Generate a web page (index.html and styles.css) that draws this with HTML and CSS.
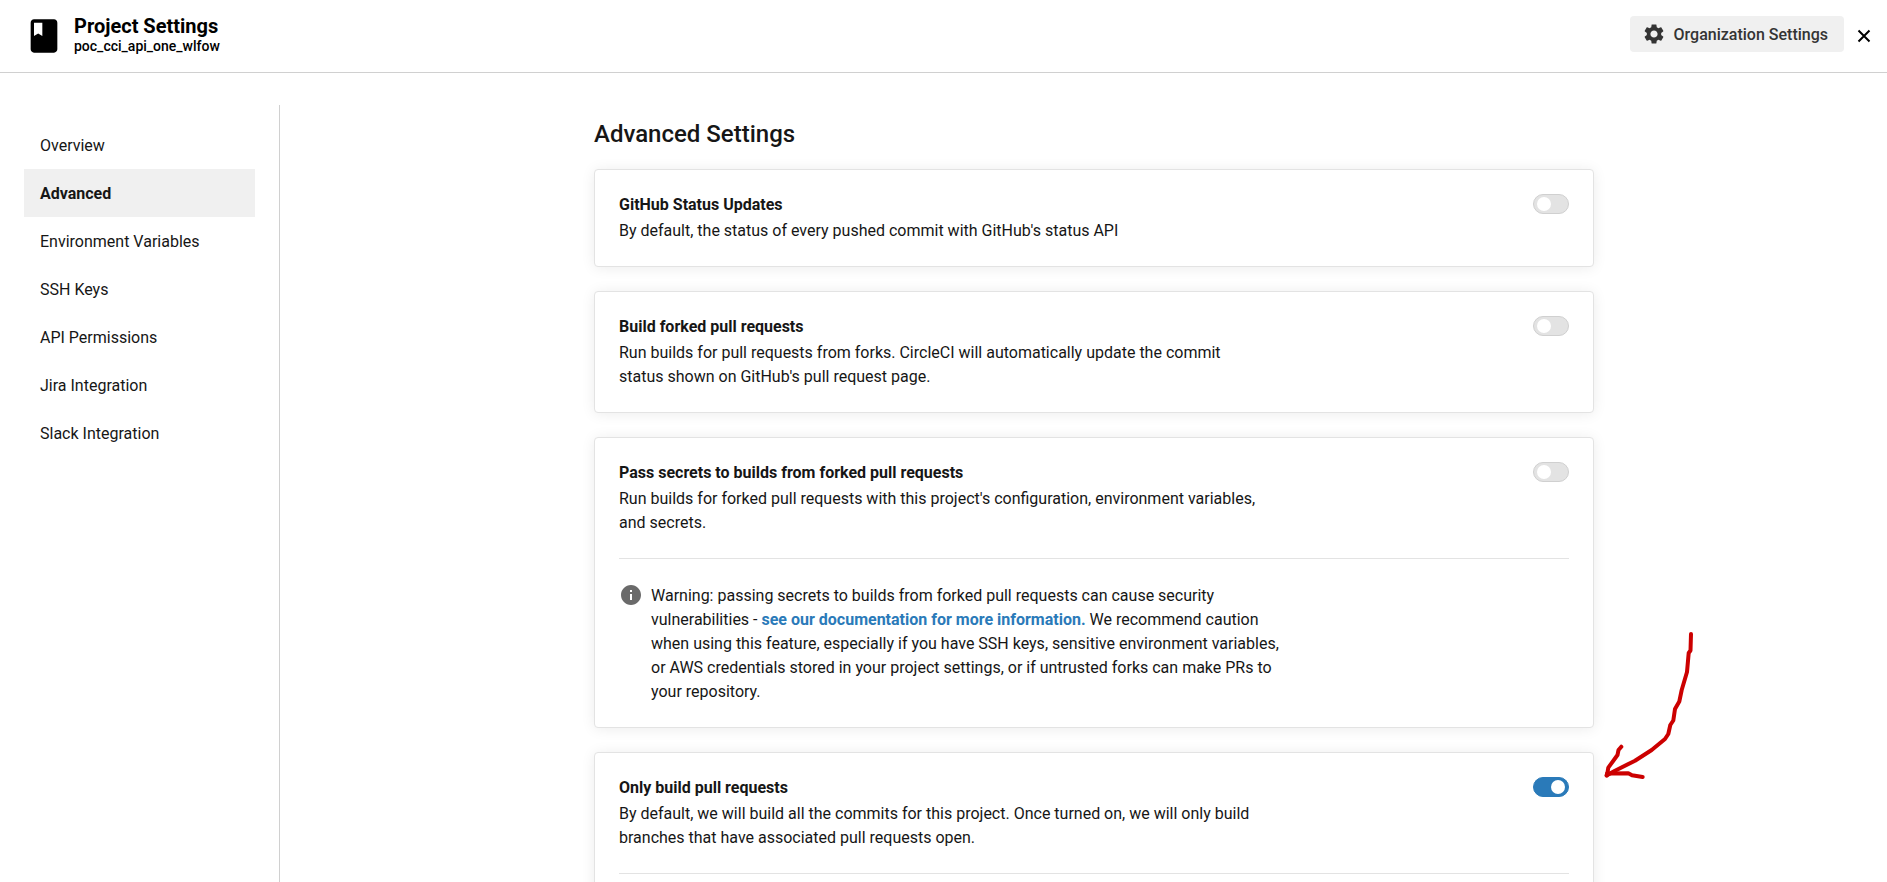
FILE: index.html
```html
<!DOCTYPE html>
<html lang="en">
<head>
<meta charset="utf-8">
<title>Project Settings</title>
<meta name="viewport" content="width=device-width, initial-scale=1">
<link rel="stylesheet" href="styles.css">
</head>
<body>
<header class="topbar">
  <svg class="topbar-icon" viewBox="0 0 24 24" aria-hidden="true"><path d="M18 2H6c-1.100 0-2 .9-2 2v16c0 1.100.9 2 2 2h12c1.100 0 2-.9 2-2V4c0-1.100-.9-2-2-2zM6 4h5v8l-2.500-1.500L6 12V4z"/></svg>
  <div class="topbar-titles">
    <h1 class="topbar-title">Project Settings</h1>
    <p class="topbar-project">poc_cci_api_one_wlfow</p>
  </div>
  <button class="org-button" type="button">
    <svg class="icon" viewBox="0 0 24 24" aria-hidden="true"><path d="M19.140 12.940c.04-.3.06-.61.06-.94 0-.32-.02-.64-.07-.94l2.030-1.580c.18-.14.23-.41.12-.61l-1.920-3.320c-.12-.22-.37-.29-.59-.22l-2.390.96c-.5-.38-1.030-.7-1.620-.94l-.36-2.540c-.04-.24-.24-.41-.48-.41h-3.840c-.24 0-.43.17-.47.41l-.36 2.540c-.59.24-1.130.57-1.620.94l-2.390-.96c-.22-.08-.47 0-.59.22L2.740 8.870c-.12.21-.08.47.12.61l2.030 1.580c-.05.3-.09.63-.09.94s.02.64.07.94l-2.030 1.580c-.18.14-.23.41-.12.61l1.920 3.320c.12.22.37.29.59.22l2.390-.96c.5.38 1.030.7 1.620.94l.36 2.540c.05.24.24.41.48.41h3.840c.24 0 .44-.17.47-.41l.36-2.540c.59-.24 1.130-.56 1.620-.94l2.390.96c.22.08.47 0 .59-.22l1.920-3.320c.12-.22.07-.47-.12-.61l-2.010-1.580zM12 15.600c-1.980 0-3.600-1.620-3.600-3.600s1.620-3.600 3.600-3.600 3.600 1.620 3.600 3.600-1.620 3.600-3.600 3.600z"/></svg>
    <span class="org-label">Organization Settings</span>
  </button>
  <button class="close-button" type="button" aria-label="Close">
    <svg class="close-icon" viewBox="0 0 16 16" aria-hidden="true"><path d="M2.500 2.500l11 11M13.500 2.500l-11 11"/></svg>
  </button>
</header>

<div class="layout">
  <nav class="sidebar" aria-label="Project settings">
    <a class="nav-link" href="#overview">Overview</a>
    <a class="nav-link nav-link-active" href="#advanced" aria-current="page">Advanced</a>
    <a class="nav-link" href="#environment">Environment Variables</a>
    <a class="nav-link" href="#ssh">SSH Keys</a>
    <a class="nav-link" href="#api">API Permissions</a>
    <a class="nav-link" href="#jira">Jira Integration</a>
    <a class="nav-link" href="#slack">Slack Integration</a>
  </nav>

  <main class="content">
    <h2 class="content-title">Advanced Settings</h2>
    <div class="cards">
      <section class="card">
        <div class="setting">
          <div class="setting-text">
            <label class="setting-title" for="status">GitHub Status Updates</label>
            <p class="setting-desc">By default, the status of every pushed commit with GitHub's status API</p>
          </div>
          <input class="toggle" type="checkbox" id="status">
        </div>
      </section>

      <section class="card">
        <div class="setting">
          <div class="setting-text">
            <label class="setting-title" for="forks">Build forked pull requests</label>
            <p class="setting-desc">Run builds for pull requests from forks. CircleCI will automatically update the commit status shown on GitHub's pull request page.</p>
          </div>
          <input class="toggle" type="checkbox" id="forks">
        </div>
      </section>

      <section class="card">
        <div class="setting">
          <div class="setting-text">
            <label class="setting-title" for="secrets">Pass secrets to builds from forked pull requests</label>
            <p class="setting-desc">Run builds for forked pull requests with this project's configuration, environment variables, and secrets.</p>
          </div>
          <input class="toggle" type="checkbox" id="secrets">
        </div>
        <div class="notice">
          <svg class="icon notice-icon" viewBox="0 0 24 24" aria-hidden="true"><path d="M12 2C6.480 2 2 6.480 2 12s4.480 10 10 10 10-4.480 10-10S17.520 2 12 2zm1 15h-2v-6h2v6zm0-8h-2V7h2v2z"/></svg>
          <p class="notice-text">Warning: passing secrets to builds from forked pull requests can cause security vulnerabilities - <a class="doc-link" href="#docs">see our documentation for more information.</a> We recommend caution when using this feature, especially if you have SSH keys, sensitive environment variables, or AWS credentials stored in your project settings, or if untrusted forks can make PRs to your repository.</p>
        </div>
      </section>

      <section class="card">
        <div class="setting">
          <div class="setting-text">
            <label class="setting-title" for="only-prs">Only build pull requests</label>
            <p class="setting-desc">By default, we will build all the commits for this project. Once turned on, we will only build branches that have associated pull requests open.</p>
          </div>
          <input class="toggle" type="checkbox" id="only-prs" checked>
        </div>
        <div class="notice"></div>
        <svg class="arrow" viewBox="0 0 100 150" aria-hidden="true">
          <path d="M91 4L90.500 20.500L88.700 23L87 42L81.700 60L79.300 71.500L75 79L73.300 90.500L70.300 95L68.300 104L65 109L51.700 120L35 130.700L15 140.700L6.500 145.500"/>
          <path d="M21.300 116.700L18.500 120L17.500 125L8.300 137.700L7 145.500"/>
          <path d="M7 143.500L28.300 143.300L32 145.300L42.700 147"/>
        </svg>
      </section>
    </div>
  </main>
</div>
</body>
</html>
```

FILE: styles.css
```css
* {
  box-sizing: border-box;
}

html {
  scrollbar-width: none;
}

body {
  margin: 0;
  min-height: 100vh;
  display: flex;
  flex-direction: column;
  background: #fff;
  color: #161616;
  font-family: Roboto, "Liberation Sans", sans-serif;
  font-size: 16px;
  line-height: 24px;
}

h1,
h2,
p {
  margin: 0;
}

button {
  border: 0;
  font: inherit;
  cursor: pointer;
}

.icon {
  width: 24px;
  height: 24px;
  flex: none;
  fill: currentColor;
}

/* Top bar */
.topbar {
  display: flex;
  align-items: flex-start;
  padding: 16px 15px 16px 24px;
  border-bottom: 1px solid #d0d0d0;
  color: #000;
}

.topbar-icon {
  width: 40px;
  height: 40px;
  flex: none;
}

.topbar-titles {
  margin-left: 10px;
  flex: 1;
}

.topbar-title {
  font-size: 20px;
  line-height: 20px;
  font-weight: 700;
}

.topbar-project {
  font-size: 14px;
  line-height: 20px;
  font-weight: 500;
}

.org-button {
  display: flex;
  align-items: center;
  gap: 8px;
  height: 36px;
  padding: 0 16px 0 12px;
  border-radius: 4px;
  background: #f0f0f0;
  color: #343434;
  font-weight: 500;
}

.org-label {
  padding-top: 2px;
}

.close-button {
  display: flex;
  margin: 12px 0 0 12px;
  padding: 0;
  background: none;
}

.close-icon {
  width: 16px;
  height: 16px;
  fill: none;
  stroke: #000;
  stroke-width: 2;
}

/* Layout */
.layout {
  flex: 1;
  display: flex;
  gap: 21px;
  padding-top: 32px;
}

.sidebar {
  flex: none;
  width: 280px;
  padding: 16px 24px;
  border-right: 1px solid #d0d0d0;
}

.nav-link {
  display: block;
  padding: 13px 16px 11px;
  color: inherit;
  text-decoration: none;
}

.nav-link-active {
  background: #f0f0f0;
  font-weight: 700;
}

.content {
  flex: 1;
  max-width: 1000px;
  margin: 0 auto;
  padding: 13px 0 24px;
}

.content-title {
  margin-bottom: 19px;
  font-size: 24px;
  line-height: 32px;
  font-weight: 500;
}

.cards {
  display: flex;
  flex-direction: column;
  gap: 24px;
}

/* Setting cards */
.card {
  position: relative;
  padding: 24px;
  border: 1px solid #e3e3e3;
  border-radius: 4px;
  background: #fff;
  box-shadow: 0 1px 14px rgba(0, 0, 0, 0.08);
}

.setting {
  display: flex;
  justify-content: space-between;
  align-items: flex-start;
}

.setting-text {
  max-width: 640px;
  margin: 1px 0 -1px;
}

.setting-title {
  display: block;
  margin-bottom: 4px;
  line-height: 20px;
  font-weight: 700;
}

.toggle {
  appearance: none;
  flex: none;
  display: flex;
  align-items: center;
  width: 36px;
  height: 20px;
  margin: 0;
  padding: 0 3px;
  border: 1px solid #d0d0d0;
  border-radius: 10px;
  background: #e3e3e3;
  cursor: pointer;
}

.toggle::before {
  content: "";
  width: 14px;
  height: 14px;
  border-radius: 50%;
  background: #fff;
}

.toggle:checked {
  justify-content: flex-end;
  border-color: #2a7ab9;
  background: #2a7ab9;
}

.notice {
  display: flex;
  align-items: flex-start;
  gap: 8px;
  margin-top: 24px;
  padding-top: 24px;
  border-top: 1px solid #e3e3e3;
}

.notice-icon {
  color: #6a6a6a;
}

.notice-text {
  max-width: 640px;
  margin: 1px 0 -1px;
}

.doc-link {
  color: #2a7ab9;
  font-weight: 700;
  text-decoration: none;
}

/* Hand-drawn pointer beside the enabled switch */
.arrow {
  position: absolute;
  top: -123px;
  left: calc(100% + 7px);
  width: 100px;
  height: 150px;
  fill: none;
  stroke: #c00;
  stroke-width: 4;
  stroke-linecap: round;
  stroke-linejoin: round;
  pointer-events: none;
}
```
